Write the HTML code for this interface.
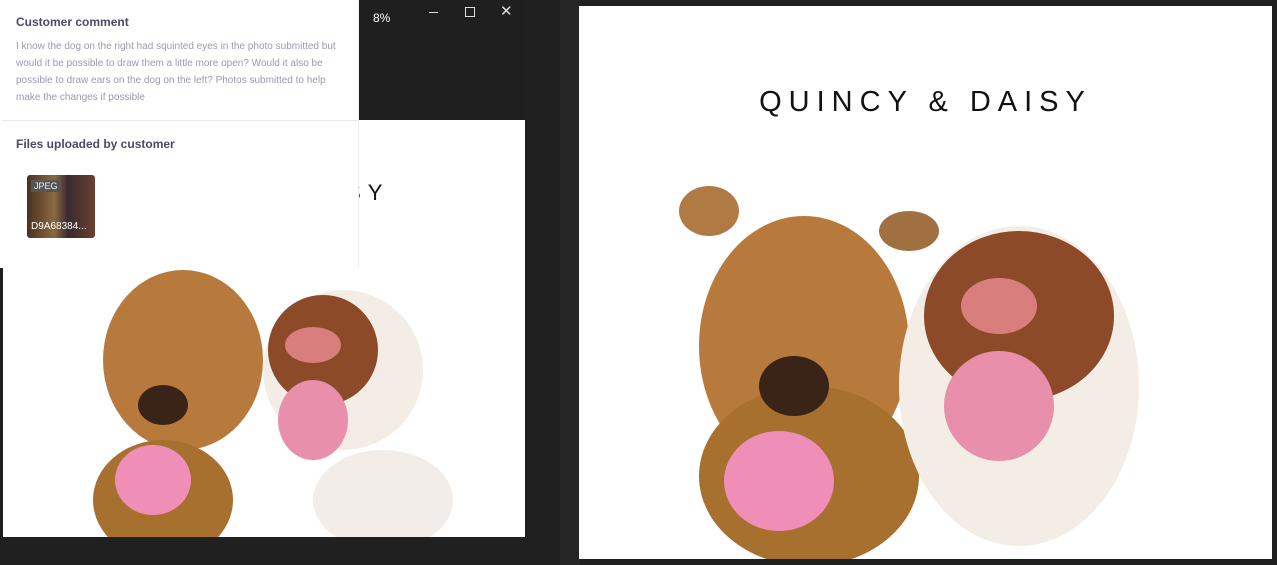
<!DOCTYPE html>
<html><head><style>
body{margin:0;width:1277px;height:565px;background:#202020;position:relative;overflow:hidden;font-family:"Liberation Sans",sans-serif}
.a{position:absolute}
</style></head><body>
<div class="a" style="left:0;top:0;width:525px;height:537px;background:#1f1f1f"></div>
<div class="a" style="left:560px;top:0;width:20px;height:565px;background:#262626"></div>
<div class="a" style="left:3px;top:120px;width:522px;height:417px;background:#fff;overflow:hidden">
<div class="a" style="left:330px;top:60px;font-size:22px;letter-spacing:7px;color:#111">ISY</div>
<svg class="a" style="left:0;top:0" width="522" height="417">
<ellipse cx="180" cy="240" rx="80" ry="90" fill="#b87a3c"/>
<ellipse cx="160" cy="380" rx="70" ry="60" fill="#a8702f"/>
<ellipse cx="340" cy="250" rx="80" ry="80" fill="#f3ede6"/>
<ellipse cx="320" cy="230" rx="55" ry="55" fill="#8c4a28"/>
<ellipse cx="310" cy="225" rx="28" ry="18" fill="#d87f7e"/>
<ellipse cx="310" cy="300" rx="35" ry="40" fill="#e78fab"/>
<ellipse cx="380" cy="380" rx="70" ry="50" fill="#f2ede8"/>
<ellipse cx="160" cy="285" rx="25" ry="20" fill="#3a2418"/>
<ellipse cx="150" cy="360" rx="38" ry="35" fill="#ef8fb8"/>
</svg>
</div>
<div class="a" style="left:373px;top:11px;color:#fff;font-size:12px">8%</div>
<div class="a" style="left:429px;top:12px;width:9px;height:1px;background:#ddd"></div>
<div class="a" style="left:465px;top:7px;width:8px;height:8px;border:1px solid #ddd"></div>
<div class="a" style="left:500px;top:2px;color:#ddd;font-size:15px">✕</div>
<div class="a" style="left:0;top:0;width:358px;height:268px;background:#fff;border-right:1px solid #eee">
<div class="a" style="left:16px;top:15px;font-size:12px;font-weight:bold;color:#4a4a68">Customer comment</div>
<div class="a" style="left:16px;top:38px;width:335px;font-size:10px;line-height:17px;color:#9a9ab0">I know the dog on the right had squinted eyes in the photo submitted but would it be possible to draw them a little more open? Would it also be possible to draw ears on the dog on the left? Photos submitted to help make the changes if possible</div>
<div class="a" style="left:2px;top:120px;width:356px;height:1px;background:#e8e8ee"></div>
<div class="a" style="left:16px;top:137px;font-size:12px;font-weight:bold;color:#4a4a68">Files uploaded by customer</div>
<div class="a" style="left:27px;top:175px;width:68px;height:63px;border-radius:3px;background:linear-gradient(90deg,#4a3020,#8a6a40 40%,#3a2a30 60%,#6a4030);overflow:hidden">
<div class="a" style="left:4px;top:5px;background:#555;color:#eee;font-size:9px;padding:1px 3px">JPEG</div>
<div class="a" style="left:4px;top:46px;color:#fff;font-size:10px">D9A68384...</div>
</div>
</div>
<div class="a" style="left:579px;top:6px;width:693px;height:553px;background:#fff;overflow:hidden">
<div class="a" style="left:0;width:693px;top:80px;text-align:center;font-size:29px;letter-spacing:7px;color:#111">QUINCY &amp; DAISY</div>
<svg class="a" style="left:0;top:0" width="693" height="553">
<ellipse cx="130" cy="205" rx="30" ry="25" fill="#b07a45"/>
<ellipse cx="330" cy="225" rx="30" ry="20" fill="#a07040"/>
<ellipse cx="225" cy="340" rx="105" ry="130" fill="#b87a3c"/>
<ellipse cx="230" cy="470" rx="110" ry="90" fill="#a8702f"/>
<ellipse cx="440" cy="380" rx="120" ry="160" fill="#f3ede6"/>
<ellipse cx="440" cy="310" rx="95" ry="85" fill="#8c4a28"/>
<ellipse cx="420" cy="300" rx="38" ry="28" fill="#d87f7e"/>
<ellipse cx="420" cy="400" rx="55" ry="55" fill="#e78fab"/>
<ellipse cx="215" cy="380" rx="35" ry="30" fill="#3a2418"/>
<ellipse cx="200" cy="475" rx="55" ry="50" fill="#ef8fb8"/>
</svg>
</div>
</body></html>
